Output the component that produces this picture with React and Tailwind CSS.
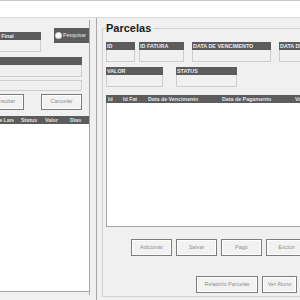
import React from 'react'

const Field = ({ label, w, className = '' }) => (
  <div className={`shrink-0 ${className}`} style={{ width: w }}>
    <div className="h-[8px] bg-[#5c5c5c] pl-[1px] text-[5.4px] font-bold leading-[8px] text-[#ececec] whitespace-nowrap overflow-hidden">
      {label}
    </div>
    <div className="h-[12px] border border-t-0 border-[#cdcdcd] bg-[#f0f0f0]" />
  </div>
)

const Btn = ({ children, w = 'w-[41px]', h = 'h-[17px]' }) => (
  <button className={`${w} ${h} shrink-0 border border-[#7c7c7c] bg-[#f2f2f2] shadow-[inset_0_0_0_1px_#ffffff] text-[5.5px] leading-none text-[#8e8e8e] whitespace-nowrap`}>
    {children}
  </button>
)

export default function App() {
  return (
    <div className="w-[300px] h-[300px] overflow-hidden bg-[#f0f0f0] font-['Liberation_Sans',Arial,sans-serif] flex flex-col">
      <div className="h-[18px] shrink-0 bg-white border-t border-t-[#c8c8c8] border-b border-b-[#d8d8d8]" />

      <div className="flex flex-1 min-h-0">
        {/* painel de busca */}
        <div className="w-[97px] shrink-0 border-r border-[#a9a9a9] overflow-hidden">
          <div className="mt-[2px] w-[90px] h-[275px] border-r border-[#a6a6a6] overflow-hidden">
            <div className="-ml-[40px] w-[129px] pt-[8px] flex flex-col">
              <div className="flex items-start">
                <Field label="Data Final" w={81} className="mt-[4px] [&>div:first-child]:pl-[28px]" />
                <label className="ml-[13px] w-[35px] h-[15px] bg-[#5c5c5c] flex items-center">
                  <span className="ml-[2px] w-[5px] h-[5px] rounded-full bg-white shadow-[0_0_0_1px_#cfcfcf]" />
                  <span className="ml-[2px] text-[5.2px] leading-none text-[#e4e4e4]">Pesquisar</span>
                </label>
              </div>
              <Field label="Aluno" w={122} className="mt-[5px] [&>div:first-child]:text-transparent" />
              <div className="mt-[3px] w-[122px] h-[11px] border border-[#cdcdcd]" />
              <div className="mt-[3px] flex pl-[23px] gap-[17px]">
                <Btn h="h-[16px]">Consultar</Btn>
                <Btn h="h-[16px]">Cancelar</Btn>
              </div>
              <div className="mt-[6px]">
                <div className="h-[8px] bg-[#5c5c5c] flex text-[5.3px] font-bold leading-[8px] text-[#e2e2e2] whitespace-nowrap">
                  <div className="w-[54px] pl-[23px] overflow-hidden">Data de Lançamento</div>
                  <div className="w-[31px] pl-[7px]">Status</div>
                  <div className="w-[25px]">Valor</div>
                  <div>Dias</div>
                </div>
                <div className="h-[168px] bg-white border-b border-[#a6a6a6]" />
              </div>
            </div>
          </div>
        </div>

        {/* parcelas */}
        <div className="flex-1 min-w-0 overflow-hidden">
          <fieldset className="ml-[5px] mt-[4px] w-[290px] border border-[#d2d2d2] pl-[3px] pb-[3px]">
            <legend className="pr-[2px] text-[11px] font-bold leading-[13px] text-[#1a1a1a]">Parcelas</legend>
            <div className="mt-[7px] flex">
              <Field label="ID" w={29} />
              <Field label="ID FATURA" w={45} className="ml-[4px]" />
              <Field label="DATA DE VENCIMENTO" w={79} className="ml-[8px]" />
              <Field label="DATA DE PAGAMENTO" w={79} className="ml-[8px]" />
            </div>
            <div className="mt-[5px] flex">
              <Field label="VALOR" w={57} />
              <Field label="STATUS" w={61} className="ml-[13px]" />
            </div>
            <div className="mt-[8px]">
              <div className="h-[8px] bg-[#5c5c5c] flex text-[5.3px] font-bold leading-[8px] text-[#e2e2e2] whitespace-nowrap">
                <div className="w-[17px] pl-[2px]">Id</div>
                <div className="w-[25px]">Id Fat</div>
                <div className="w-[74px]">Data de Vencimento</div>
                <div className="w-[73px]">Data de Pagamento</div>
                <div>Valor</div>
              </div>
              <div className="h-[124px] bg-white border-l border-b border-[#a6a6a6]" />
            </div>
            <div className="mt-[12px] ml-[25px] flex gap-[4px]">
              <Btn>Adicionar</Btn>
              <Btn>Salvar</Btn>
              <Btn>Pago</Btn>
              <Btn>Excluir</Btn>
            </div>
            <div className="mt-[20px] ml-[90px] flex gap-[4px]">
              <Btn w="w-[62px]">Relatório Parcelas</Btn>
              <Btn w="w-[35px]">Ver Aluno</Btn>
            </div>
          </fieldset>
        </div>
      </div>
    </div>
  )
}
